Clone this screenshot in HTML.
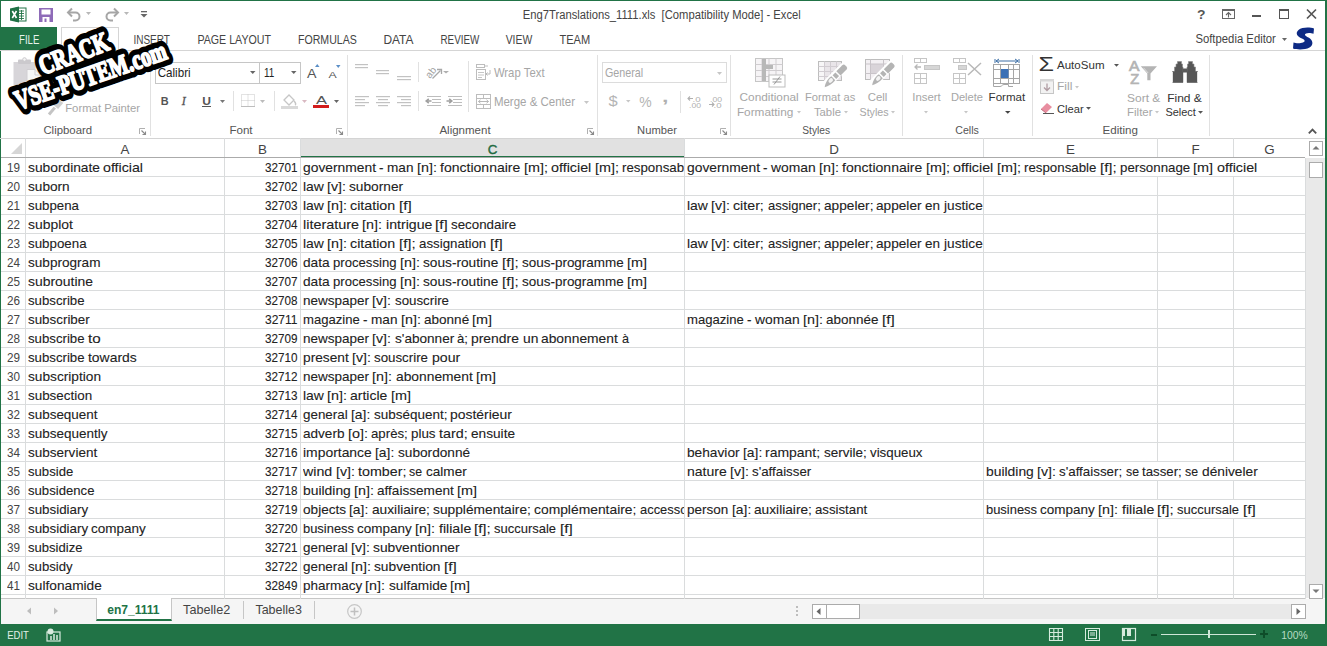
<!DOCTYPE html>
<html><head><meta charset="utf-8"><style>
html,body{margin:0;padding:0}
body{width:1327px;height:646px;position:relative;overflow:hidden;background:#fff;font-family:"Liberation Sans",sans-serif;color:#444}
.a{position:absolute}
#grid .vl{position:absolute;width:1px;background:#dadcdd}
#grid .hl{position:absolute;left:1px;width:1304px;height:1px;background:#dadcdd}
#grid .vh{position:absolute;top:138px;width:1px;height:19px;background:#dadcdd}
#grid .ch{position:absolute;top:139px;height:18px;line-height:22px;text-align:center;font-size:13.4px;color:#444;background:#fff}
#grid .ch.sel{background:#e1e1e1;color:#1f6b41;height:17px;border-bottom:2px solid #217346;top:139px;line-height:22px;-webkit-text-stroke:0.4px #1f6b41}
#grid .rh{position:absolute;left:1px;width:24px;height:18px;line-height:20px;text-align:center;font-size:13.5px;color:#444}
#grid .s{position:absolute;top:0;transform-origin:0 0;white-space:nowrap}
#grid .c{position:absolute;height:18px;line-height:20px;font-size:13.5px;color:#222;-webkit-text-stroke:0.1px #222;white-space:nowrap;overflow:hidden}
#grid .c.n{text-align:right}
.t{position:absolute;white-space:nowrap;transform-origin:0 0}
svg.a{overflow:visible}

</style></head><body>
<div class="a" style="left:0px;top:0px;width:1327px;height:1px;background:#217346"></div>
<div class="a" style="left:0px;top:0px;width:1px;height:646px;background:#217346"></div>
<div class="a" style="left:1325px;top:0px;width:2px;height:646px;background:#217346"></div>
<svg class="a" style="left:10px;top:6px;" width="17" height="17" viewBox="0 0 17 17"><rect x="6" y="2" width="10" height="13" fill="#fff" stroke="#217346" stroke-width="1"/><path d="M9 5h5M9 7.5h5M9 10h5M9 12.5h5M11.5 4v10" stroke="#217346" stroke-width="0.9"/><path d="M0 2.5L9 0.5V16.5L0 14.5Z" fill="#1e7145"/><path d="M2.3 5L6.5 12M6.5 5L2.3 12" stroke="#fff" stroke-width="1.6"/></svg>
<svg class="a" style="left:39px;top:8px;" width="14" height="14" viewBox="0 0 14 14"><path d="M0 0H14V14H0Z" fill="#8e6bb8"/><rect x="2.5" y="1.5" width="9" height="5" fill="#fff"/><rect x="3.5" y="9" width="7" height="5" fill="#fff"/><rect x="5.5" y="10.5" width="2" height="3.5" fill="#8e6bb8"/></svg>
<svg class="a" style="left:66px;top:7px;" width="16" height="14" viewBox="0 0 16 14"><path d="M2.5 5.5H9.5A4 4 0 0 1 9.5 13.5H7" fill="none" stroke="#a6a6a6" stroke-width="2"/><path d="M6 1.5L2 5.5L6 9.5" fill="none" stroke="#a6a6a6" stroke-width="2"/></svg>
<svg class="a" style="left:86px;top:12px;" width="6" height="4" viewBox="0 0 6 4"><path d="M0 0H5L2.5 3Z" fill="#b8b8b8"/></svg>
<svg class="a" style="left:104px;top:7px;" width="16" height="14" viewBox="0 0 16 14"><path d="M13.5 5.5H6.5A4 4 0 0 0 6.5 13.5H9" fill="none" stroke="#a6a6a6" stroke-width="2"/><path d="M10 1.5L14 5.5L10 9.5" fill="none" stroke="#a6a6a6" stroke-width="2"/></svg>
<svg class="a" style="left:124px;top:12px;" width="6" height="4" viewBox="0 0 6 4"><path d="M0 0H5L2.5 3Z" fill="#b8b8b8"/></svg>
<svg class="a" style="left:140px;top:11px;" width="8" height="7" viewBox="0 0 8 7"><rect x="1" y="0" width="6" height="1.3" fill="#666"/><path d="M0.5 3H7.5L4 6.5Z" fill="#666"/></svg>


<svg class="a" style="left:1222px;top:9px;" width="13" height="10" viewBox="0 0 13 10"><rect x="0.5" y="0.5" width="12" height="9" fill="none" stroke="#666"/><rect x="0" y="0" width="13" height="2" fill="#666"/><path d="M6.5 3.5V8.5M4 6L6.5 3.5L9 6" fill="none" stroke="#666" stroke-width="1.1"/></svg>
<div class="a" style="left:1252px;top:15px;width:9px;height:2px;background:#555"></div>
<svg class="a" style="left:1279px;top:9px;" width="10" height="10" viewBox="0 0 10 10"><rect x="0.5" y="0.5" width="9" height="9" fill="none" stroke="#555"/><rect x="0" y="0" width="10" height="2" fill="#555"/></svg>
<svg class="a" style="left:1306px;top:9px;" width="11" height="10" viewBox="0 0 11 10"><path d="M1 0.5L10 9.5M10 0.5L1 9.5" stroke="#555" stroke-width="1.7"/></svg>
<div class="a" style="left:1px;top:27px;width:56px;height:23px;background:#217346"></div>

<div class="a" style="left:61px;top:27px;width:58px;height:24px;background:#fff;border:1px solid #d5d5d5;border-bottom:none;box-sizing:border-box"></div>
<div class="a" style="left:0px;top:50px;width:61px;height:1px;background:#d5d5d5"></div>
<div class="a" style="left:119px;top:50px;width:1206px;height:1px;background:#d5d5d5"></div>








<svg class="a" style="left:1282px;top:38px;" width="6" height="4" viewBox="0 0 6 4"><path d="M0 0H5L2.5 3Z" fill="#666"/></svg>
<svg class="a" style="left:1293px;top:27px;" width="22" height="23" viewBox="0 0 22 23"><path d="M21 1.5C17 0.2 9 0 5.5 3C2 6 4 9.5 9 11.5C12 12.8 12.5 14.5 10 15.5C7.5 16.5 3 16.5 0.5 15.5L0 21.5C4 22.8 12 23 16.5 20.5C21 18 20 13 15.5 10.5C12 8.8 11 7.5 13 6.5C15 5.5 18.5 6 20.5 6.8Z" fill="#0d2a84"/></svg>
<div class="a" style="left:150px;top:55px;width:1px;height:81px;background:#e1e1e1"></div>
<div class="a" style="left:347px;top:55px;width:1px;height:81px;background:#e1e1e1"></div>
<div class="a" style="left:597px;top:55px;width:1px;height:81px;background:#e1e1e1"></div>
<div class="a" style="left:730px;top:55px;width:1px;height:81px;background:#e1e1e1"></div>
<div class="a" style="left:902px;top:55px;width:1px;height:81px;background:#e1e1e1"></div>
<div class="a" style="left:1032px;top:55px;width:1px;height:81px;background:#e1e1e1"></div>
<div class="a" style="left:1209px;top:55px;width:1px;height:81px;background:#e1e1e1"></div>
<div class="a" style="left:0px;top:138px;width:1325px;height:1px;background:#d4d4d4"></div>







<svg class="a" style="left:139px;top:128px;" width="8" height="7" viewBox="0 0 8 7"><path d="M0.5 6V0.5H6" fill="none" stroke="#b0b0b0" stroke-width="1"/><path d="M2.5 2.5L6.5 6.5M3.5 6.5H6.5V3.5" fill="none" stroke="#8a8a8a" stroke-width="1.1"/></svg>
<svg class="a" style="left:336px;top:128px;" width="8" height="7" viewBox="0 0 8 7"><path d="M0.5 6V0.5H6" fill="none" stroke="#b0b0b0" stroke-width="1"/><path d="M2.5 2.5L6.5 6.5M3.5 6.5H6.5V3.5" fill="none" stroke="#8a8a8a" stroke-width="1.1"/></svg>
<svg class="a" style="left:587px;top:128px;" width="8" height="7" viewBox="0 0 8 7"><path d="M0.5 6V0.5H6" fill="none" stroke="#b0b0b0" stroke-width="1"/><path d="M2.5 2.5L6.5 6.5M3.5 6.5H6.5V3.5" fill="none" stroke="#8a8a8a" stroke-width="1.1"/></svg>
<svg class="a" style="left:720px;top:128px;" width="8" height="7" viewBox="0 0 8 7"><path d="M0.5 6V0.5H6" fill="none" stroke="#b0b0b0" stroke-width="1"/><path d="M2.5 2.5L6.5 6.5M3.5 6.5H6.5V3.5" fill="none" stroke="#8a8a8a" stroke-width="1.1"/></svg>
<svg class="a" style="left:1308px;top:128px;" width="9" height="6" viewBox="0 0 9 6"><path d="M0.8 5.3L4.5 1.5L8.2 5.3" fill="none" stroke="#555" stroke-width="1.8"/></svg>
<svg class="a" style="left:12px;top:56px;" width="30" height="40" viewBox="0 0 30 40"><rect x="1.5" y="6" width="22" height="23" fill="#d7d5d9"/><rect x="6" y="3.5" width="13" height="4.5" rx="1" fill="#cbc9cd"/><circle cx="12.5" cy="3.5" r="1.8" fill="#f4f4f4" stroke="#cbc9cd"/><path d="M15 13.5H23L28.5 19V36H15Z" fill="#f6f6f6" stroke="#d0ced2"/><path d="M23 13.5V19H28.5" fill="none" stroke="#d0ced2"/></svg>

<svg class="a" style="left:46px;top:99px;" width="18" height="18" viewBox="0 0 18 18"><g transform="translate(3,15.5) rotate(-50)"><rect x="0" y="-1.5" width="9" height="3" fill="#c4c4c4"/><rect x="10" y="-3.5" width="8" height="7" fill="#cfcfcf"/></g></svg>
<div class="a" style="left:155px;top:62px;width:105px;height:22px;background:#fff;border:1px solid #c6c6c6;box-sizing:border-box"></div>
<div class="a" style="left:259px;top:62px;width:42px;height:22px;background:#fff;border:1px solid #c6c6c6;box-sizing:border-box"></div>


<svg class="a" style="left:250px;top:71px;" width="6" height="4" viewBox="0 0 6 4"><path d="M0 0H5.5L2.75 3Z" fill="#666"/></svg>
<svg class="a" style="left:291px;top:71px;" width="6" height="4" viewBox="0 0 6 4"><path d="M0 0H5.5L2.75 3Z" fill="#666"/></svg>

<svg class="a" style="left:315px;top:64px;" width="5" height="4" viewBox="0 0 5 4"><path d="M0 3H4.5L2.25 0Z" fill="#5b8fc7"/></svg>

<svg class="a" style="left:336px;top:65px;" width="5" height="4" viewBox="0 0 5 4"><path d="M0 0H4.5L2.25 3Z" fill="#5b8fc7"/></svg>



<div class="a" style="left:202px;top:106px;width:9px;height:1px;background:#555"></div>
<svg class="a" style="left:220px;top:100px;" width="6" height="4" viewBox="0 0 6 4"><path d="M0 0H5L2.5 3Z" fill="#777"/></svg>
<div class="a" style="left:233px;top:91px;width:1px;height:20px;background:#e1e1e1"></div>
<svg class="a" style="left:241px;top:94px;" width="14" height="14" viewBox="0 0 14 14"><rect x="0.5" y="0.5" width="13" height="12" fill="none" stroke="#c6c6c6" stroke-dasharray="1 1"/><path d="M7 0.5V12.5M0.5 6.5H13.5" stroke="#c6c6c6" stroke-dasharray="1 1"/><path d="M0 12.5H14" stroke="#bdbdbd"/></svg>
<svg class="a" style="left:260px;top:100px;" width="6" height="4" viewBox="0 0 6 4"><path d="M0 0H5L2.5 3Z" fill="#bbb"/></svg>
<div class="a" style="left:274px;top:91px;width:1px;height:20px;background:#e1e1e1"></div>
<svg class="a" style="left:281px;top:94px;" width="17" height="15" viewBox="0 0 17 15"><path d="M3 6L8 1L13 6L8 11Z" fill="#fff" stroke="#c6c6c6" stroke-width="1.3"/><path d="M13 7C15 9 15 10.5 14 11" stroke="#c6c6c6" stroke-width="1.5" fill="none"/><rect x="0" y="12" width="17" height="3" fill="#d9d9d9"/></svg>
<svg class="a" style="left:302px;top:100px;" width="6" height="4" viewBox="0 0 6 4"><path d="M0 0H5L2.5 3Z" fill="#d9b9c2"/></svg>

<div class="a" style="left:313px;top:105px;width:16px;height:3px;background:#d31c1c"></div>
<svg class="a" style="left:334px;top:100px;" width="6" height="4" viewBox="0 0 6 4"><path d="M0 0H5L2.5 3Z" fill="#666"/></svg>
<svg class="a" style="left:355px;top:64px;" width="13" height="6" viewBox="0 0 13 6"><rect x="0" y="0" width="13" height="1.2" fill="#c2c2c2"/><rect x="0" y="3" width="13" height="1.2" fill="#c2c2c2"/></svg>
<svg class="a" style="left:376px;top:70px;" width="13" height="6" viewBox="0 0 13 6"><rect x="0" y="0" width="13" height="1.2" fill="#c2c2c2"/><rect x="0" y="3" width="13" height="1.2" fill="#c2c2c2"/></svg>
<svg class="a" style="left:397px;top:76px;" width="14" height="6" viewBox="0 0 14 6"><rect x="0" y="0" width="14" height="1.2" fill="#c2c2c2"/><rect x="0" y="3" width="14" height="1.2" fill="#c2c2c2"/></svg>
<svg class="a" style="left:355px;top:96px;" width="14" height="12" viewBox="0 0 14 12"><rect x="0" y="0" width="14" height="1.2" fill="#c2c2c2"/><rect x="0" y="3" width="10" height="1.2" fill="#c2c2c2"/><rect x="0" y="6" width="14" height="1.2" fill="#c2c2c2"/><rect x="0" y="9" width="10" height="1.2" fill="#c2c2c2"/></svg>
<svg class="a" style="left:376px;top:96px;" width="14" height="12" viewBox="0 0 14 12"><rect x="0.0" y="0" width="14" height="1.2" fill="#c2c2c2"/><rect x="2.0" y="3" width="10" height="1.2" fill="#c2c2c2"/><rect x="0.0" y="6" width="14" height="1.2" fill="#c2c2c2"/><rect x="2.0" y="9" width="10" height="1.2" fill="#c2c2c2"/></svg>
<svg class="a" style="left:397px;top:96px;" width="14" height="12" viewBox="0 0 14 12"><rect x="0" y="0" width="14" height="1.2" fill="#c2c2c2"/><rect x="4" y="3" width="10" height="1.2" fill="#c2c2c2"/><rect x="0" y="6" width="14" height="1.2" fill="#c2c2c2"/><rect x="4" y="9" width="10" height="1.2" fill="#c2c2c2"/></svg>
<div class="a" style="left:418px;top:62px;width:1px;height:20px;background:#e1e1e1"></div>
<div class="a" style="left:418px;top:91px;width:1px;height:20px;background:#e1e1e1"></div>
<div class="a" style="left:468px;top:61px;width:1px;height:51px;background:#e1e1e1"></div>
<svg class="a" style="left:424px;top:62px;" width="28" height="20" viewBox="0 0 28 20"><text font-family="Liberation Sans" font-size="10" fill="#a0a0a0" transform="translate(6,17) rotate(-52)">ab</text><path d="M8.5 16.5L16.5 8.5" stroke="#a8a8a8" stroke-width="1.3"/><path d="M13 7.5H17.5V12" stroke="#a8a8a8" stroke-width="1.3" fill="none"/><path d="M19 9H25L22 11.5Z" fill="#b0b0b0"/></svg>
<svg class="a" style="left:425px;top:96px;" width="17" height="11" viewBox="0 0 17 11"><path d="M2 0.5H16M7 3.5H16M7 6.5H16M2 9.5H16" stroke="#bdbdbd" stroke-width="1"/><path d="M6.5 5H2M3.8 2.8L1.2 5L3.8 7.2" stroke="#a0a0a0" stroke-width="1.6" fill="none"/></svg>
<svg class="a" style="left:446px;top:96px;" width="17" height="11" viewBox="0 0 17 11"><path d="M2 0.5H16M7 3.5H16M7 6.5H16M2 9.5H16" stroke="#bdbdbd" stroke-width="1"/><path d="M0.5 5H5M3.2 2.8L5.8 5L3.2 7.2" stroke="#a0a0a0" stroke-width="1.6" fill="none"/></svg>
<svg class="a" style="left:476px;top:64px;" width="15" height="16" viewBox="0 0 15 16"><rect x="0.5" y="0.5" width="8" height="3" fill="none" stroke="#bdbdbd"/><path d="M9 2H12" stroke="#bdbdbd"/><rect x="0.5" y="5.5" width="9" height="10" fill="none" stroke="#bdbdbd"/><path d="M2 8.5H8M2 11H8M2 13.5H6" stroke="#c6c6c6"/><path d="M14 6V10H10M11.5 8.5L10 10L11.5 11.5" stroke="#b8b8b8" fill="none"/></svg>

<svg class="a" style="left:476px;top:94px;" width="15" height="15" viewBox="0 0 15 15"><rect x="0.5" y="0.5" width="14" height="14" fill="none" stroke="#bdbdbd"/><path d="M0.5 4.5H14.5M0.5 10.5H14.5M7.5 0.5V4.5M7.5 10.5V14.5" stroke="#bdbdbd"/><path d="M2.5 7.5H12.5M4.5 5.8L2.5 7.5L4.5 9.2M10.5 5.8L12.5 7.5L10.5 9.2" stroke="#b8b8b8" fill="none"/></svg>

<svg class="a" style="left:584px;top:101px;" width="6" height="4" viewBox="0 0 6 4"><path d="M0 0H5L2.5 3Z" fill="#c6c6c6"/></svg>
<div class="a" style="left:602px;top:62px;width:125px;height:21px;background:#fff;border:1px solid #dcdcdc;box-sizing:border-box"></div>

<svg class="a" style="left:717px;top:72px;" width="6" height="4" viewBox="0 0 6 4"><path d="M0 0H5L2.5 3Z" fill="#c6c6c6"/></svg>

<svg class="a" style="left:626px;top:100px;" width="5" height="3" viewBox="0 0 5 3"><path d="M0 0H4.5L2.25 2.5Z" fill="#c6c6c6"/></svg>


<div class="a" style="left:680px;top:91px;width:1px;height:22px;background:#e1e1e1"></div>
<svg class="a" style="left:687px;top:95px;" width="16" height="13" viewBox="0 0 16 13"><path d="M1 3.5H6M3 1.5L1 3.5L3 5.5" stroke="#b0b0b0" stroke-width="1.1" fill="none"/><text x="5.5" y="6.5" font-family="Liberation Sans" font-size="8" fill="#b0b0b0" textLength="8" lengthAdjust="spacingAndGlyphs">.0</text><text x="2" y="12.5" font-family="Liberation Sans" font-size="8" fill="#b0b0b0" textLength="12" lengthAdjust="spacingAndGlyphs">.00</text></svg>
<svg class="a" style="left:708px;top:95px;" width="16" height="13" viewBox="0 0 16 13"><text x="2" y="6.5" font-family="Liberation Sans" font-size="8" fill="#b0b0b0" textLength="12" lengthAdjust="spacingAndGlyphs">.00</text><path d="M1 9.5H6M4 7.5L6 9.5L4 11.5" stroke="#b0b0b0" stroke-width="1.1" fill="none"/><text x="5.5" y="12.5" font-family="Liberation Sans" font-size="8" fill="#b0b0b0" textLength="8" lengthAdjust="spacingAndGlyphs">.0</text></svg>
<svg class="a" style="left:755px;top:58px;" width="31" height="29" viewBox="0 0 31 29"><rect x="0.5" y="0.5" width="27" height="23" fill="#f6f4f6" stroke="#c6c6c6"/><path d="M7 0.5V23.5M14 0.5V23.5M21 0.5V23.5M0.5 6.5H27.5M0.5 12.5H27.5M0.5 18.5H27.5" stroke="#d0cdd0"/><rect x="7" y="1" width="4" height="22" fill="#b8b8b8"/><rect x="7" y="7" width="11" height="4" fill="#b8b8b8"/><rect x="14" y="17" width="16" height="12" fill="#fff" stroke="#bdbdbd"/><path d="M17.5 21H26.5M17.5 24H26.5M19 26.5L25 18.5" stroke="#999" stroke-width="1"/></svg>


<svg class="a" style="left:797px;top:111px;" width="5" height="3" viewBox="0 0 5 3"><path d="M0 0H4L2 2.5Z" fill="#c6c6c6"/></svg>
<svg class="a" style="left:815px;top:57px;" width="36" height="34" viewBox="0 0 36 34"><rect x="3.5" y="4.5" width="23" height="19" fill="#e9e5e9" stroke="#bdbdbd"/><rect x="4" y="5" width="5.5" height="18" fill="#f7f6f7"/><path d="M9.5 4.5V23.5M15.5 4.5V23.5M21.5 4.5V23.5M3.5 9.5H26.5M3.5 14.5H26.5M3.5 19.5H26.5" stroke="#d2cdd2"/><g transform="translate(9.5,30) rotate(-45)"><rect x="-1" y="-4.8" width="32" height="8.6" rx="3" fill="#fff"/><path d="M0 0.3C3 -2.2 8 -3.6 12.5 -2.8L12.5 2.8C8 3.2 3 2 0 0.3Z" fill="#b4b4b4"/><ellipse cx="9" cy="-0.2" rx="2.6" ry="1.9" fill="#f4f4f4"/><rect x="14" y="-2.6" width="4" height="5.2" fill="#b4b4b4"/><path d="M19.5 -2.8H28Q30 -2.8 30 -0.5V1Q30 3.2 28 3.2H19.5Z" fill="#b4b4b4"/></g></svg>


<svg class="a" style="left:844px;top:111px;" width="5" height="3" viewBox="0 0 5 3"><path d="M0 0H4L2 2.5Z" fill="#c6c6c6"/></svg>
<svg class="a" style="left:862px;top:56px;" width="36" height="34" viewBox="0 0 36 34"><rect x="3.5" y="3.5" width="24" height="20" fill="#f3f0f3" stroke="#bdbdbd"/><rect x="9" y="8" width="12.5" height="9.5" fill="#d9d4d9"/><path d="M3.5 8H27.5M3.5 17.5H27.5M8.5 3.5V23.5M21.5 3.5V23.5" stroke="#c9c4c9"/><g transform="translate(10,29) rotate(-45)"><rect x="-1" y="-4.8" width="32" height="8.6" rx="3" fill="#fff"/><path d="M0 0.3C3 -2.2 8 -3.6 12.5 -2.8L12.5 2.8C8 3.2 3 2 0 0.3Z" fill="#b4b4b4"/><ellipse cx="9" cy="-0.2" rx="2.6" ry="1.9" fill="#f4f4f4"/><rect x="14" y="-2.6" width="4" height="5.2" fill="#b4b4b4"/><path d="M19.5 -2.8H28Q30 -2.8 30 -0.5V1Q30 3.2 28 3.2H19.5Z" fill="#b4b4b4"/></g></svg>


<svg class="a" style="left:891px;top:111px;" width="5" height="3" viewBox="0 0 5 3"><path d="M0 0H4L2 2.5Z" fill="#c6c6c6"/></svg>
<svg class="a" style="left:914px;top:58px;" width="26" height="27" viewBox="0 0 26 27"><rect x="0.5" y="0.5" width="6" height="4" fill="none" stroke="#c6c6c6"/><rect x="6.5" y="0.5" width="6" height="4" fill="none" stroke="#c6c6c6"/><path d="M7 9H1M3.5 6.5L1 9L3.5 11.5" stroke="#b8b8b8" stroke-width="1.3" fill="none"/><rect x="10.5" y="7.5" width="15" height="4" fill="#d6d6d6" stroke="#c6c6c6"/><rect x="0.5" y="15.5" width="12" height="10" fill="none" stroke="#c6c6c6"/><path d="M6.5 15.5V25.5M0.5 20.5H12.5" stroke="#c6c6c6"/></svg>

<svg class="a" style="left:924px;top:111px;" width="5" height="3" viewBox="0 0 5 3"><path d="M0 0H4L2 2.5Z" fill="#c6c6c6"/></svg>
<svg class="a" style="left:953px;top:58px;" width="30" height="27" viewBox="0 0 30 27"><rect x="0.5" y="0.5" width="6" height="4" fill="none" stroke="#c6c6c6"/><rect x="6.5" y="0.5" width="6" height="4" fill="none" stroke="#c6c6c6"/><rect x="5.5" y="7.5" width="8" height="4" fill="#d6d6d6" stroke="#c6c6c6"/><path d="M15 5L28 17M28 5L15 17" stroke="#b8b8b8" stroke-width="1.5"/><rect x="0.5" y="15.5" width="12" height="10" fill="none" stroke="#c6c6c6"/><path d="M6.5 15.5V25.5M0.5 20.5H12.5" stroke="#c6c6c6"/></svg>

<svg class="a" style="left:964px;top:111px;" width="5" height="3" viewBox="0 0 5 3"><path d="M0 0H4L2 2.5Z" fill="#c6c6c6"/></svg>
<svg class="a" style="left:993px;top:57px;" width="28" height="30" viewBox="0 0 28 30"><path d="M2 2V6M26 2V6M3 4H25M6 2L3 4L6 6M22 2L25 4L22 6" stroke="#3c6fa6" stroke-width="1" fill="none"/><rect x="0.5" y="7.5" width="26" height="19" fill="#fff" stroke="#a6a6a6"/><path d="M7.5 7.5V26.5M15.5 7.5V26.5M20.5 7.5V26.5M0.5 12.5H26.5M0.5 21.5H26.5" stroke="#a6a6a6"/><rect x="8" y="12" width="7.5" height="9" fill="#3b70b5"/><path d="M0.5 26.5V29.5H7C9 29.5 9 27.5 11 27.5H15.5V29.5H20" stroke="#a6a6a6" fill="none"/></svg>

<svg class="a" style="left:1005px;top:111px;" width="6" height="3" viewBox="0 0 6 3"><path d="M0 0H5.5L2.75 2.7Z" fill="#444"/></svg>


<svg class="a" style="left:1114px;top:64px;" width="6" height="3" viewBox="0 0 6 3"><path d="M0 0H5L2.5 2.7Z" fill="#555"/></svg>
<svg class="a" style="left:1040px;top:79px;" width="14" height="15" viewBox="0 0 14 15"><rect x="0.5" y="0.5" width="13" height="14" fill="#f2f2f2" stroke="#c6c6c6"/><rect x="0" y="0" width="14" height="2.5" fill="#d6d6d6"/><path d="M7 4.5V11.5M4 8.5L7 11.5L10 8.5" stroke="#b09ca2" stroke-width="1.3" fill="none"/></svg>

<svg class="a" style="left:1075px;top:86px;" width="5" height="3" viewBox="0 0 5 3"><path d="M0 0H4L2 2.5Z" fill="#c6c6c6"/></svg>
<svg class="a" style="left:1040px;top:102px;" width="15" height="12" viewBox="0 0 15 12"><path d="M1 7L7 1L12 5L6 11Z" fill="#e88ea0"/><path d="M1 7L6 11" stroke="#c56f80"/><path d="M3 11.5H14" stroke="#555" stroke-width="1"/></svg>

<svg class="a" style="left:1086px;top:107px;" width="6" height="3" viewBox="0 0 6 3"><path d="M0 0H5L2.5 2.7Z" fill="#555"/></svg>
<svg class="a" style="left:1128px;top:58px;" width="31" height="28" viewBox="0 0 31 28"><text x="1" y="12.7" font-family="Liberation Sans" font-size="15" fill="#b4b4b4" stroke="#b4b4b4" stroke-width="0.7" textLength="10.5" lengthAdjust="spacingAndGlyphs">A</text><text x="2.2" y="25.8" font-family="Liberation Sans" font-size="15" fill="#b4b4b4" stroke="#b4b4b4" stroke-width="0.7" textLength="9" lengthAdjust="spacingAndGlyphs">Z</text><path d="M12.8 8.2H29L22.5 15.5V22.3H19.3V15.5Z" fill="#b4b4b4"/><path d="M15.5 9.8L20.2 15" stroke="#dedede" stroke-width="1" fill="none"/></svg>


<svg class="a" style="left:1155px;top:111px;" width="5" height="3" viewBox="0 0 5 3"><path d="M0 0H4L2 2.5Z" fill="#c6c6c6"/></svg>
<svg class="a" style="left:1172px;top:61px;" width="26" height="22" viewBox="0 0 26 22"><g fill="#575757" stroke="#8a8a8a" stroke-width="0.6"><path d="M5.5 0.5H9.5V3H10.5V6H11V21.5H3V13H0.5V21.5H3V13H0.5V10.5H2.5V6H4V3H5.5Z"/><path d="M20.5 0.5H16.5V3H15.5V6H15V21.5H23V13H25.5V21.5H23V13H25.5V10.5H23.5V6H22V3H20.5Z"/></g><rect x="0.5" y="10.5" width="10.5" height="11" fill="#575757"/><rect x="15" y="10.5" width="10.5" height="11" fill="#575757"/><rect x="10.5" y="7.5" width="5" height="4" fill="#5a5a5a"/><path d="M0.5 11V21.5M25.5 11V21.5" stroke="#fff" stroke-width="0.8"/></svg>


<svg class="a" style="left:1198px;top:111px;" width="6" height="3" viewBox="0 0 6 3"><path d="M0 0H5L2.5 2.7Z" fill="#555"/></svg>
<svg class="a" style="left:11px;top:143px;" width="12" height="12" viewBox="0 0 12 12"><path d="M11 0V11H0Z" fill="#d6d6d6"/></svg>
<div class="a" style="left:1305px;top:158px;width:20px;height:440px;background:#e9e9e9"></div>
<div class="a" style="left:1309px;top:141px;width:14px;height:15px;background:#fff;border:1px solid #ababab;box-sizing:border-box"></div>
<svg class="a" style="left:1312px;top:145px;" width="8" height="5" viewBox="0 0 8 5"><path d="M0.5 4.5H7.5L4 1Z" fill="#777"/></svg>
<div class="a" style="left:1309px;top:162px;width:14px;height:16px;background:#fff;border:1px solid #ababab;box-sizing:border-box"></div>
<div class="a" style="left:1309px;top:584px;width:14px;height:15px;background:#fff;border:1px solid #ababab;box-sizing:border-box"></div>
<svg class="a" style="left:1312px;top:589px;" width="8" height="5" viewBox="0 0 8 5"><path d="M0.5 0.5H7.5L4 4Z" fill="#777"/></svg>
<div class="a" style="left:1px;top:598px;width:1305px;height:1px;background:#c6c6c6"></div>
<div class="a" style="left:1px;top:599px;width:1324px;height:25px;background:#f5f5f5"></div>
<svg class="a" style="left:26px;top:607px;" width="6" height="8" viewBox="0 0 6 8"><path d="M5 0.5V7.5L1 4Z" fill="#bdbdbd"/></svg>
<svg class="a" style="left:53px;top:607px;" width="6" height="8" viewBox="0 0 6 8"><path d="M1 0.5V7.5L5 4Z" fill="#bdbdbd"/></svg>
<div class="a" style="left:96px;top:598px;width:76px;height:23px;background:#fff;border-left:1px solid #c6c6c6;border-right:1px solid #c6c6c6;border-bottom:2px solid #217346;box-sizing:border-box"></div>


<div class="a" style="left:243px;top:601px;width:1px;height:18px;background:#c6c6c6"></div>

<div class="a" style="left:314px;top:601px;width:1px;height:18px;background:#c6c6c6"></div>
<svg class="a" style="left:347px;top:604px;" width="16" height="16" viewBox="0 0 16 16"><circle cx="7.5" cy="7.5" r="6.8" fill="none" stroke="#c6c6c6" stroke-width="1.2"/><path d="M7.5 3.5V11.5M3.5 7.5H11.5" stroke="#c0c0c0" stroke-width="1.5"/></svg>
<svg class="a" style="left:795px;top:605px;" width="4" height="12" viewBox="0 0 4 12"><circle cx="2" cy="2" r="1" fill="#aaa"/><circle cx="2" cy="6" r="1" fill="#aaa"/><circle cx="2" cy="10" r="1" fill="#aaa"/></svg>
<div class="a" style="left:812px;top:604px;width:493px;height:15px;background:#e9e9e9"></div>
<div class="a" style="left:812px;top:604px;width:15px;height:15px;background:#fff;border:1px solid #ababab;box-sizing:border-box"></div>
<svg class="a" style="left:816px;top:608px;" width="6" height="8" viewBox="0 0 6 8"><path d="M4.5 0V7L0.5 3.5Z" fill="#666"/></svg>
<div class="a" style="left:826px;top:604px;width:34px;height:15px;background:#fff;border:1px solid #ababab;box-sizing:border-box"></div>
<div class="a" style="left:1291px;top:604px;width:15px;height:15px;background:#fff;border:1px solid #ababab;box-sizing:border-box"></div>
<svg class="a" style="left:1296px;top:608px;" width="6" height="8" viewBox="0 0 6 8"><path d="M0.5 0V7L4.5 3.5Z" fill="#666"/></svg>
<div class="a" style="left:0px;top:624px;width:1327px;height:22px;background:#217346"></div>

<svg class="a" style="left:47px;top:628px;" width="14" height="14" viewBox="0 0 14 14"><rect x="0" y="4" width="13" height="9" fill="none" stroke="#d8ebde" stroke-width="1.2"/><circle cx="3.5" cy="3.5" r="3" fill="#d8ebde"/><path d="M4 12V8M7 12V6M10 12V7" stroke="#d8ebde" stroke-width="1.5"/></svg>
<svg class="a" style="left:1049px;top:628px;" width="14" height="13" viewBox="0 0 14 13"><path d="M0.5 0.5H13.5V12.5H0.5ZM0.5 4.5H13.5M0.5 8.5H13.5M4.8 0.5V12.5M9.2 0.5V12.5" fill="none" stroke="#d6ebdd" stroke-width="1.1"/></svg>
<svg class="a" style="left:1085px;top:628px;" width="15" height="13" viewBox="0 0 15 13"><rect x="0.5" y="0.5" width="14" height="12" fill="none" stroke="#d6ebdd"/><rect x="3.5" y="2.5" width="8" height="8" fill="none" stroke="#d6ebdd"/><path d="M5 5H10M5 7H10" stroke="#d6ebdd"/></svg>
<svg class="a" style="left:1122px;top:628px;" width="14" height="13" viewBox="0 0 14 13"><rect x="0.5" y="0.5" width="13" height="12" fill="none" stroke="#d6ebdd" stroke-width="1.2"/><rect x="0" y="0" width="3" height="8" fill="#d6ebdd"/><rect x="5" y="0" width="4" height="8" fill="#d6ebdd"/></svg>
<div class="a" style="left:1151px;top:634px;width:6px;height:1.5px;background:#0e4d29"></div>
<div class="a" style="left:1161px;top:634px;width:95px;height:1px;background:#cfe6d7"></div>
<div class="a" style="left:1208px;top:630px;width:1.5px;height:8px;background:#cfe6d7"></div>
<svg class="a" style="left:1260px;top:630px;" width="8" height="8" viewBox="0 0 8 8"><path d="M4 0V8M0 4H8" stroke="#0e4d29" stroke-width="2"/></svg>

<svg class="a" style="left:0;top:0" width="1327" height="646" font-family="Liberation Sans"><text x="522.80" y="19.30" font-size="12.21" fill="#444" textLength="278.00" lengthAdjust="spacingAndGlyphs">Eng7Translations_1111.xls &#160;[Compatibility&#160;Mode]&#160;-&#160;Excel</text><text x="1197.10" y="18.70" font-size="13.08" fill="#555" font-weight="bold" textLength="8.50" lengthAdjust="spacingAndGlyphs">?</text><text x="19.10" y="43.70" font-size="12.35" fill="#e8f3ec" textLength="20.20" lengthAdjust="spacingAndGlyphs">FILE</text><text x="133.40" y="43.60" font-size="12.35" fill="#444" textLength="36.50" lengthAdjust="spacingAndGlyphs">INSERT</text><text x="197.40" y="43.60" font-size="12.35" fill="#444" textLength="73.60" lengthAdjust="spacingAndGlyphs">PAGE&#160;LAYOUT</text><text x="298.00" y="43.60" font-size="12.35" fill="#444" textLength="58.90" lengthAdjust="spacingAndGlyphs">FORMULAS</text><text x="383.40" y="43.60" font-size="12.35" fill="#444" textLength="30.00" lengthAdjust="spacingAndGlyphs">DATA</text><text x="440.50" y="43.60" font-size="12.35" fill="#444" textLength="38.80" lengthAdjust="spacingAndGlyphs">REVIEW</text><text x="505.70" y="43.60" font-size="12.35" fill="#444" textLength="26.50" lengthAdjust="spacingAndGlyphs">VIEW</text><text x="559.40" y="43.60" font-size="12.35" fill="#444" textLength="30.70" lengthAdjust="spacingAndGlyphs">TEAM</text><text x="1195.40" y="42.70" font-size="12.65" fill="#444" textLength="80.50" lengthAdjust="spacingAndGlyphs">Softpedia&#160;Editor</text><text x="43.40" y="134.40" font-size="11.05" fill="#555" textLength="48.70" lengthAdjust="spacingAndGlyphs">Clipboard</text><text x="229.40" y="134.40" font-size="11.05" fill="#555" textLength="23.20" lengthAdjust="spacingAndGlyphs">Font</text><text x="439.40" y="134.40" font-size="11.05" fill="#555" textLength="51.20" lengthAdjust="spacingAndGlyphs">Alignment</text><text x="637.10" y="134.40" font-size="11.05" fill="#555" textLength="39.80" lengthAdjust="spacingAndGlyphs">Number</text><text x="802.30" y="134.40" font-size="11.05" fill="#555" textLength="27.80" lengthAdjust="spacingAndGlyphs">Styles</text><text x="955.30" y="134.40" font-size="11.05" fill="#555" textLength="23.60" lengthAdjust="spacingAndGlyphs">Cells</text><text x="1102.60" y="134.40" font-size="11.05" fill="#555" textLength="35.40" lengthAdjust="spacingAndGlyphs">Editing</text><text x="65.20" y="112.20" font-size="11.34" fill="#a6a6a6" textLength="74.90" lengthAdjust="spacingAndGlyphs">Format&#160;Painter</text><text x="157.70" y="76.90" font-size="12.06" fill="#222" textLength="32.90" lengthAdjust="spacingAndGlyphs">Calibri</text><text x="263.90" y="76.90" font-size="12.06" fill="#222" textLength="10.30" lengthAdjust="spacingAndGlyphs">11</text><text x="306.90" y="77.60" font-size="12.06" fill="#555" textLength="9.50" lengthAdjust="spacingAndGlyphs">A</text><text x="328.40" y="77.60" font-size="9.88" fill="#555" textLength="8.20" lengthAdjust="spacingAndGlyphs">A</text><text x="160.70" y="104.70" font-size="10.90" fill="#555" font-weight="bold" textLength="7.90" lengthAdjust="spacingAndGlyphs">B</text><text x="181.80" y="104.90" font-size="11.92" fill="#555" font-family="Liberation Serif" font-style="italic" stroke="#555" stroke-width="0.3">I</text><text x="202.20" y="104.70" font-size="10.90" fill="#555" font-weight="bold" textLength="8.70" lengthAdjust="spacingAndGlyphs">U</text><text x="315.90" y="104.00" font-size="11.63" fill="#555" textLength="11.00" lengthAdjust="spacingAndGlyphs">A</text><text x="493.90" y="76.60" font-size="12.06" fill="#a6a6a6" textLength="50.70" lengthAdjust="spacingAndGlyphs">Wrap&#160;Text</text><text x="493.90" y="106.00" font-size="12.06" fill="#a6a6a6" textLength="81.10" lengthAdjust="spacingAndGlyphs">Merge&#160;&amp;&#160;Center</text><text x="604.90" y="76.60" font-size="12.06" fill="#a6a6a6" textLength="38.20" lengthAdjust="spacingAndGlyphs">General</text><text x="608.60" y="105.50" font-size="13.81" fill="#b4b4b4" textLength="9.20" lengthAdjust="spacingAndGlyphs">$</text><text x="639.20" y="106.70" font-size="13.81" fill="#b4b4b4" textLength="12.40" lengthAdjust="spacingAndGlyphs">%</text><text x="661.90" y="102.00" font-size="13.81" fill="#b0b0b0" font-weight="bold" textLength="6.50" lengthAdjust="spacingAndGlyphs">,</text><text x="739.60" y="101.30" font-size="11.34" fill="#a6a6a6" textLength="59.10" lengthAdjust="spacingAndGlyphs">Conditional</text><text x="736.90" y="116.00" font-size="11.34" fill="#a6a6a6" textLength="56.40" lengthAdjust="spacingAndGlyphs">Formatting</text><text x="805.00" y="101.30" font-size="11.34" fill="#a6a6a6" textLength="50.30" lengthAdjust="spacingAndGlyphs">Format&#160;as</text><text x="813.90" y="116.00" font-size="11.34" fill="#a6a6a6" textLength="27.10" lengthAdjust="spacingAndGlyphs">Table</text><text x="867.70" y="101.30" font-size="11.34" fill="#a6a6a6" textLength="19.60" lengthAdjust="spacingAndGlyphs">Cell</text><text x="859.50" y="116.00" font-size="11.34" fill="#a6a6a6" textLength="29.10" lengthAdjust="spacingAndGlyphs">Styles</text><text x="912.30" y="101.30" font-size="11.34" fill="#a6a6a6" textLength="28.50" lengthAdjust="spacingAndGlyphs">Insert</text><text x="950.90" y="101.30" font-size="11.34" fill="#a6a6a6" textLength="32.10" lengthAdjust="spacingAndGlyphs">Delete</text><text x="988.60" y="101.30" font-size="11.34" fill="#333" textLength="36.70" lengthAdjust="spacingAndGlyphs">Format</text><text x="1038.50" y="70.80" font-size="19.62" fill="#333" textLength="15.50" lengthAdjust="spacingAndGlyphs">Σ</text><text x="1057.00" y="69.00" font-size="10.90" fill="#333" textLength="47.50" lengthAdjust="spacingAndGlyphs">AutoSum</text><text x="1057.00" y="90.40" font-size="11.34" fill="#a6a6a6" textLength="15.40" lengthAdjust="spacingAndGlyphs">Fill</text><text x="1057.00" y="112.70" font-size="11.34" fill="#333" textLength="26.60" lengthAdjust="spacingAndGlyphs">Clear</text><text x="1127.00" y="101.50" font-size="11.34" fill="#a6a6a6" textLength="33.30" lengthAdjust="spacingAndGlyphs">Sort&#160;&amp;</text><text x="1127.00" y="116.40" font-size="11.34" fill="#a6a6a6" textLength="25.60" lengthAdjust="spacingAndGlyphs">Filter</text><text x="1167.20" y="101.50" font-size="11.34" fill="#333" textLength="34.70" lengthAdjust="spacingAndGlyphs">Find&#160;&amp;</text><text x="1165.40" y="116.40" font-size="11.34" fill="#333" textLength="30.50" lengthAdjust="spacingAndGlyphs">Select</text><text x="107.20" y="614.40" font-size="12.06" fill="#217346" font-weight="bold" textLength="52.40" lengthAdjust="spacingAndGlyphs">en7_1111</text><text x="183.10" y="614.40" font-size="12.06" fill="#444" textLength="47.10" lengthAdjust="spacingAndGlyphs">Tabelle2</text><text x="255.40" y="614.40" font-size="12.06" fill="#444" textLength="46.50" lengthAdjust="spacingAndGlyphs">Tabelle3</text><text x="7.20" y="638.50" font-size="10.90" fill="#e3efe7" textLength="21.70" lengthAdjust="spacingAndGlyphs">EDIT</text><text x="1281.20" y="638.90" font-size="11.34" fill="#b6dcc3" textLength="26.50" lengthAdjust="spacingAndGlyphs">100%</text></svg>
<div id="grid"><div class="vl" style="left:25px;top:158px;height:19px"></div><div class="vl" style="left:224px;top:158px;height:19px"></div><div class="vl" style="left:300px;top:158px;height:19px"></div><div class="vl" style="left:684px;top:158px;height:19px"></div><div class="vl" style="left:1305px;top:158px;height:19px"></div><div class="vl" style="left:25px;top:177px;height:19px"></div><div class="vl" style="left:224px;top:177px;height:19px"></div><div class="vl" style="left:300px;top:177px;height:19px"></div><div class="vl" style="left:684px;top:177px;height:19px"></div><div class="vl" style="left:983px;top:177px;height:19px"></div><div class="vl" style="left:1157px;top:177px;height:19px"></div><div class="vl" style="left:1233px;top:177px;height:19px"></div><div class="vl" style="left:1305px;top:177px;height:19px"></div><div class="vl" style="left:25px;top:196px;height:19px"></div><div class="vl" style="left:224px;top:196px;height:19px"></div><div class="vl" style="left:300px;top:196px;height:19px"></div><div class="vl" style="left:684px;top:196px;height:19px"></div><div class="vl" style="left:983px;top:196px;height:19px"></div><div class="vl" style="left:1157px;top:196px;height:19px"></div><div class="vl" style="left:1233px;top:196px;height:19px"></div><div class="vl" style="left:1305px;top:196px;height:19px"></div><div class="vl" style="left:25px;top:215px;height:19px"></div><div class="vl" style="left:224px;top:215px;height:19px"></div><div class="vl" style="left:300px;top:215px;height:19px"></div><div class="vl" style="left:684px;top:215px;height:19px"></div><div class="vl" style="left:983px;top:215px;height:19px"></div><div class="vl" style="left:1157px;top:215px;height:19px"></div><div class="vl" style="left:1233px;top:215px;height:19px"></div><div class="vl" style="left:1305px;top:215px;height:19px"></div><div class="vl" style="left:25px;top:234px;height:19px"></div><div class="vl" style="left:224px;top:234px;height:19px"></div><div class="vl" style="left:300px;top:234px;height:19px"></div><div class="vl" style="left:684px;top:234px;height:19px"></div><div class="vl" style="left:983px;top:234px;height:19px"></div><div class="vl" style="left:1157px;top:234px;height:19px"></div><div class="vl" style="left:1233px;top:234px;height:19px"></div><div class="vl" style="left:1305px;top:234px;height:19px"></div><div class="vl" style="left:25px;top:253px;height:19px"></div><div class="vl" style="left:224px;top:253px;height:19px"></div><div class="vl" style="left:300px;top:253px;height:19px"></div><div class="vl" style="left:684px;top:253px;height:19px"></div><div class="vl" style="left:983px;top:253px;height:19px"></div><div class="vl" style="left:1157px;top:253px;height:19px"></div><div class="vl" style="left:1233px;top:253px;height:19px"></div><div class="vl" style="left:1305px;top:253px;height:19px"></div><div class="vl" style="left:25px;top:272px;height:19px"></div><div class="vl" style="left:224px;top:272px;height:19px"></div><div class="vl" style="left:300px;top:272px;height:19px"></div><div class="vl" style="left:684px;top:272px;height:19px"></div><div class="vl" style="left:983px;top:272px;height:19px"></div><div class="vl" style="left:1157px;top:272px;height:19px"></div><div class="vl" style="left:1233px;top:272px;height:19px"></div><div class="vl" style="left:1305px;top:272px;height:19px"></div><div class="vl" style="left:25px;top:291px;height:19px"></div><div class="vl" style="left:224px;top:291px;height:19px"></div><div class="vl" style="left:300px;top:291px;height:19px"></div><div class="vl" style="left:684px;top:291px;height:19px"></div><div class="vl" style="left:983px;top:291px;height:19px"></div><div class="vl" style="left:1157px;top:291px;height:19px"></div><div class="vl" style="left:1233px;top:291px;height:19px"></div><div class="vl" style="left:1305px;top:291px;height:19px"></div><div class="vl" style="left:25px;top:310px;height:19px"></div><div class="vl" style="left:224px;top:310px;height:19px"></div><div class="vl" style="left:300px;top:310px;height:19px"></div><div class="vl" style="left:684px;top:310px;height:19px"></div><div class="vl" style="left:983px;top:310px;height:19px"></div><div class="vl" style="left:1157px;top:310px;height:19px"></div><div class="vl" style="left:1233px;top:310px;height:19px"></div><div class="vl" style="left:1305px;top:310px;height:19px"></div><div class="vl" style="left:25px;top:329px;height:19px"></div><div class="vl" style="left:224px;top:329px;height:19px"></div><div class="vl" style="left:300px;top:329px;height:19px"></div><div class="vl" style="left:684px;top:329px;height:19px"></div><div class="vl" style="left:983px;top:329px;height:19px"></div><div class="vl" style="left:1157px;top:329px;height:19px"></div><div class="vl" style="left:1233px;top:329px;height:19px"></div><div class="vl" style="left:1305px;top:329px;height:19px"></div><div class="vl" style="left:25px;top:348px;height:19px"></div><div class="vl" style="left:224px;top:348px;height:19px"></div><div class="vl" style="left:300px;top:348px;height:19px"></div><div class="vl" style="left:684px;top:348px;height:19px"></div><div class="vl" style="left:983px;top:348px;height:19px"></div><div class="vl" style="left:1157px;top:348px;height:19px"></div><div class="vl" style="left:1233px;top:348px;height:19px"></div><div class="vl" style="left:1305px;top:348px;height:19px"></div><div class="vl" style="left:25px;top:367px;height:19px"></div><div class="vl" style="left:224px;top:367px;height:19px"></div><div class="vl" style="left:300px;top:367px;height:19px"></div><div class="vl" style="left:684px;top:367px;height:19px"></div><div class="vl" style="left:983px;top:367px;height:19px"></div><div class="vl" style="left:1157px;top:367px;height:19px"></div><div class="vl" style="left:1233px;top:367px;height:19px"></div><div class="vl" style="left:1305px;top:367px;height:19px"></div><div class="vl" style="left:25px;top:386px;height:19px"></div><div class="vl" style="left:224px;top:386px;height:19px"></div><div class="vl" style="left:300px;top:386px;height:19px"></div><div class="vl" style="left:684px;top:386px;height:19px"></div><div class="vl" style="left:983px;top:386px;height:19px"></div><div class="vl" style="left:1157px;top:386px;height:19px"></div><div class="vl" style="left:1233px;top:386px;height:19px"></div><div class="vl" style="left:1305px;top:386px;height:19px"></div><div class="vl" style="left:25px;top:405px;height:19px"></div><div class="vl" style="left:224px;top:405px;height:19px"></div><div class="vl" style="left:300px;top:405px;height:19px"></div><div class="vl" style="left:684px;top:405px;height:19px"></div><div class="vl" style="left:983px;top:405px;height:19px"></div><div class="vl" style="left:1157px;top:405px;height:19px"></div><div class="vl" style="left:1233px;top:405px;height:19px"></div><div class="vl" style="left:1305px;top:405px;height:19px"></div><div class="vl" style="left:25px;top:424px;height:19px"></div><div class="vl" style="left:224px;top:424px;height:19px"></div><div class="vl" style="left:300px;top:424px;height:19px"></div><div class="vl" style="left:684px;top:424px;height:19px"></div><div class="vl" style="left:983px;top:424px;height:19px"></div><div class="vl" style="left:1157px;top:424px;height:19px"></div><div class="vl" style="left:1233px;top:424px;height:19px"></div><div class="vl" style="left:1305px;top:424px;height:19px"></div><div class="vl" style="left:25px;top:443px;height:19px"></div><div class="vl" style="left:224px;top:443px;height:19px"></div><div class="vl" style="left:300px;top:443px;height:19px"></div><div class="vl" style="left:684px;top:443px;height:19px"></div><div class="vl" style="left:983px;top:443px;height:19px"></div><div class="vl" style="left:1157px;top:443px;height:19px"></div><div class="vl" style="left:1233px;top:443px;height:19px"></div><div class="vl" style="left:1305px;top:443px;height:19px"></div><div class="vl" style="left:25px;top:462px;height:19px"></div><div class="vl" style="left:224px;top:462px;height:19px"></div><div class="vl" style="left:300px;top:462px;height:19px"></div><div class="vl" style="left:684px;top:462px;height:19px"></div><div class="vl" style="left:983px;top:462px;height:19px"></div><div class="vl" style="left:1305px;top:462px;height:19px"></div><div class="vl" style="left:25px;top:481px;height:19px"></div><div class="vl" style="left:224px;top:481px;height:19px"></div><div class="vl" style="left:300px;top:481px;height:19px"></div><div class="vl" style="left:684px;top:481px;height:19px"></div><div class="vl" style="left:983px;top:481px;height:19px"></div><div class="vl" style="left:1157px;top:481px;height:19px"></div><div class="vl" style="left:1233px;top:481px;height:19px"></div><div class="vl" style="left:1305px;top:481px;height:19px"></div><div class="vl" style="left:25px;top:500px;height:19px"></div><div class="vl" style="left:224px;top:500px;height:19px"></div><div class="vl" style="left:300px;top:500px;height:19px"></div><div class="vl" style="left:684px;top:500px;height:19px"></div><div class="vl" style="left:983px;top:500px;height:19px"></div><div class="vl" style="left:1305px;top:500px;height:19px"></div><div class="vl" style="left:25px;top:519px;height:19px"></div><div class="vl" style="left:224px;top:519px;height:19px"></div><div class="vl" style="left:300px;top:519px;height:19px"></div><div class="vl" style="left:684px;top:519px;height:19px"></div><div class="vl" style="left:983px;top:519px;height:19px"></div><div class="vl" style="left:1157px;top:519px;height:19px"></div><div class="vl" style="left:1233px;top:519px;height:19px"></div><div class="vl" style="left:1305px;top:519px;height:19px"></div><div class="vl" style="left:25px;top:538px;height:19px"></div><div class="vl" style="left:224px;top:538px;height:19px"></div><div class="vl" style="left:300px;top:538px;height:19px"></div><div class="vl" style="left:684px;top:538px;height:19px"></div><div class="vl" style="left:983px;top:538px;height:19px"></div><div class="vl" style="left:1157px;top:538px;height:19px"></div><div class="vl" style="left:1233px;top:538px;height:19px"></div><div class="vl" style="left:1305px;top:538px;height:19px"></div><div class="vl" style="left:25px;top:557px;height:19px"></div><div class="vl" style="left:224px;top:557px;height:19px"></div><div class="vl" style="left:300px;top:557px;height:19px"></div><div class="vl" style="left:684px;top:557px;height:19px"></div><div class="vl" style="left:983px;top:557px;height:19px"></div><div class="vl" style="left:1157px;top:557px;height:19px"></div><div class="vl" style="left:1233px;top:557px;height:19px"></div><div class="vl" style="left:1305px;top:557px;height:19px"></div><div class="vl" style="left:25px;top:576px;height:19px"></div><div class="vl" style="left:224px;top:576px;height:19px"></div><div class="vl" style="left:300px;top:576px;height:19px"></div><div class="vl" style="left:684px;top:576px;height:19px"></div><div class="vl" style="left:983px;top:576px;height:19px"></div><div class="vl" style="left:1157px;top:576px;height:19px"></div><div class="vl" style="left:1233px;top:576px;height:19px"></div><div class="vl" style="left:1305px;top:576px;height:19px"></div><div class="vl" style="left:25px;top:595px;height:4px"></div><div class="vl" style="left:224px;top:595px;height:4px"></div><div class="vl" style="left:300px;top:595px;height:4px"></div><div class="vl" style="left:684px;top:595px;height:4px"></div><div class="vl" style="left:983px;top:595px;height:4px"></div><div class="vl" style="left:1157px;top:595px;height:4px"></div><div class="vl" style="left:1233px;top:595px;height:4px"></div><div class="vl" style="left:1305px;top:595px;height:4px"></div><div class="hl" style="top:176px"></div><div class="hl" style="top:195px"></div><div class="hl" style="top:214px"></div><div class="hl" style="top:233px"></div><div class="hl" style="top:252px"></div><div class="hl" style="top:271px"></div><div class="hl" style="top:290px"></div><div class="hl" style="top:309px"></div><div class="hl" style="top:328px"></div><div class="hl" style="top:347px"></div><div class="hl" style="top:366px"></div><div class="hl" style="top:385px"></div><div class="hl" style="top:404px"></div><div class="hl" style="top:423px"></div><div class="hl" style="top:442px"></div><div class="hl" style="top:461px"></div><div class="hl" style="top:480px"></div><div class="hl" style="top:499px"></div><div class="hl" style="top:518px"></div><div class="hl" style="top:537px"></div><div class="hl" style="top:556px"></div><div class="hl" style="top:575px"></div><div class="hl" style="top:594px"></div><div class="ch" style="left:26px;width:198px">A</div><div class="vh" style="left:25px"></div><div class="ch" style="left:225px;width:75px">B</div><div class="vh" style="left:224px"></div><div class="ch sel" style="left:301px;width:383px">C</div><div class="vh" style="left:300px"></div><div class="ch" style="left:685px;width:298px">D</div><div class="vh" style="left:684px"></div><div class="ch" style="left:984px;width:173px">E</div><div class="vh" style="left:983px"></div><div class="ch" style="left:1158px;width:75px">F</div><div class="vh" style="left:1157px"></div><div class="ch" style="left:1234px;width:71px">G</div><div class="vh" style="left:1233px"></div><div class="a" style="left:1px;top:157px;width:1304px;height:1px;background:#ababab"></div><div class="rh" style="top:158px"><span class="s" style="left:5.50px;transform:scaleX(0.8661)">19</span></div><div class="c" style="top:158px;left:28px;width:195px"><span class="s" style="left:0.00px;transform:scaleX(1.0207)">subordinate</span><span class="s" style="left:75.33px;transform:scaleX(1.0523)">official</span></div><div class="c n" style="top:158px;left:225px;width:73px"><span class="s" style="left:40.49px;transform:scaleX(0.8661)">32701</span></div><div class="c" style="top:158px;left:303px;width:381px"><span class="s" style="left:0.00px;transform:scaleX(1.0242)">government</span><span class="s" style="left:76.33px;transform:scaleX(0.9988)">-</span><span class="s" style="left:84.13px;transform:scaleX(1.0071)">man</span><span class="s" style="left:113.90px;transform:scaleX(1.0628)">[n]:</span><span class="s" style="left:137.15px;transform:scaleX(1.0394)">fonctionnaire</span><span class="s" style="left:220.81px;transform:scaleX(1.0645)">[m];</span><span class="s" style="left:248.08px;transform:scaleX(1.0595)">officiel</span><span class="s" style="left:291.68px;transform:scaleX(1.0645)">[m];</span><span class="s" style="left:318.94px;transform:scaleX(0.9847)">responsable</span><span class="s" style="left:394.68px;transform:scaleX(1.1361)">[f]</span></div><div class="c" style="top:158px;left:687px;width:618px"><span class="s" style="left:0.00px;transform:scaleX(1.0242)">government</span><span class="s" style="left:76.33px;transform:scaleX(0.9988)">-</span><span class="s" style="left:84.13px;transform:scaleX(1.0264)">woman</span><span class="s" style="left:132.12px;transform:scaleX(1.0628)">[n]:</span><span class="s" style="left:155.37px;transform:scaleX(1.0394)">fonctionnaire</span><span class="s" style="left:239.03px;transform:scaleX(1.0645)">[m];</span><span class="s" style="left:266.30px;transform:scaleX(1.0595)">officiel</span><span class="s" style="left:309.90px;transform:scaleX(1.0645)">[m];</span><span class="s" style="left:337.16px;transform:scaleX(0.9847)">responsable</span><span class="s" style="left:412.90px;transform:scaleX(1.1137)">[f];</span><span class="s" style="left:432.93px;transform:scaleX(0.9848)">personnage</span><span class="s" style="left:506.47px;transform:scaleX(1.0681)">[m]</span><span class="s" style="left:529.81px;transform:scaleX(1.0595)">officiel</span></div><div class="rh" style="top:177px"><span class="s" style="left:5.50px;transform:scaleX(0.8661)">20</span></div><div class="c" style="top:177px;left:28px;width:195px"><span class="s" style="left:0.00px;transform:scaleX(1.0103)">suborn</span></div><div class="c n" style="top:177px;left:225px;width:73px"><span class="s" style="left:40.49px;transform:scaleX(0.8661)">32702</span></div><div class="c" style="top:177px;left:303px;width:1002px"><span class="s" style="left:0.00px;transform:scaleX(1.0306)">law</span><span class="s" style="left:24.19px;transform:scaleX(1.0475)">[v]:</span><span class="s" style="left:46.36px;transform:scaleX(1.0156)">suborner</span></div><div class="rh" style="top:196px"><span class="s" style="left:5.50px;transform:scaleX(0.8661)">21</span></div><div class="c" style="top:196px;left:28px;width:195px"><span class="s" style="left:0.00px;transform:scaleX(0.9823)">subpena</span></div><div class="c n" style="top:196px;left:225px;width:73px"><span class="s" style="left:40.49px;transform:scaleX(0.8661)">32703</span></div><div class="c" style="top:196px;left:303px;width:381px"><span class="s" style="left:0.00px;transform:scaleX(1.0306)">law</span><span class="s" style="left:24.19px;transform:scaleX(1.0628)">[n]:</span><span class="s" style="left:47.45px;transform:scaleX(1.0573)">citation</span><span class="s" style="left:95.99px;transform:scaleX(1.1361)">[f]</span></div><div class="c" style="top:196px;left:687px;width:618px"><span class="s" style="left:0.00px;transform:scaleX(1.0306)">law</span><span class="s" style="left:24.19px;transform:scaleX(1.0475)">[v]:</span><span class="s" style="left:46.36px;transform:scaleX(1.0534)">citer;</span><span class="s" style="left:80.50px;transform:scaleX(0.9641)">assigner;</span><span class="s" style="left:136.62px;transform:scaleX(1.0133)">appeler;</span><span class="s" style="left:189.37px;transform:scaleX(1.0106)">appeler</span><span class="s" style="left:238.20px;transform:scaleX(0.9992)">en</span><span class="s" style="left:256.52px;transform:scaleX(1.0121)">justice</span></div><div class="rh" style="top:215px"><span class="s" style="left:5.50px;transform:scaleX(0.8661)">22</span></div><div class="c" style="top:215px;left:28px;width:195px"><span class="s" style="left:0.00px;transform:scaleX(1.0307)">subplot</span></div><div class="c n" style="top:215px;left:225px;width:73px"><span class="s" style="left:40.49px;transform:scaleX(0.8661)">32704</span></div><div class="c" style="top:215px;left:303px;width:1002px"><span class="s" style="left:0.00px;transform:scaleX(1.0683)">literature</span><span class="s" style="left:59.43px;transform:scaleX(1.0628)">[n]:</span><span class="s" style="left:82.68px;transform:scaleX(1.0473)">intrigue</span><span class="s" style="left:132.37px;transform:scaleX(1.1361)">[f]</span><span class="s" style="left:148.47px;transform:scaleX(0.9870)">secondaire</span></div><div class="rh" style="top:234px"><span class="s" style="left:5.50px;transform:scaleX(0.8661)">23</span></div><div class="c" style="top:234px;left:28px;width:195px"><span class="s" style="left:0.00px;transform:scaleX(0.9884)">subpoena</span></div><div class="c n" style="top:234px;left:225px;width:73px"><span class="s" style="left:40.49px;transform:scaleX(0.8661)">32705</span></div><div class="c" style="top:234px;left:303px;width:381px"><span class="s" style="left:0.00px;transform:scaleX(1.0306)">law</span><span class="s" style="left:24.19px;transform:scaleX(1.0628)">[n]:</span><span class="s" style="left:47.45px;transform:scaleX(1.0573)">citation</span><span class="s" style="left:95.99px;transform:scaleX(1.1137)">[f];</span><span class="s" style="left:116.01px;transform:scaleX(0.9842)">assignation</span><span class="s" style="left:186.55px;transform:scaleX(1.1361)">[f]</span></div><div class="c" style="top:234px;left:687px;width:618px"><span class="s" style="left:0.00px;transform:scaleX(1.0306)">law</span><span class="s" style="left:24.19px;transform:scaleX(1.0475)">[v]:</span><span class="s" style="left:46.36px;transform:scaleX(1.0534)">citer;</span><span class="s" style="left:80.50px;transform:scaleX(0.9641)">assigner;</span><span class="s" style="left:136.62px;transform:scaleX(1.0133)">appeler;</span><span class="s" style="left:189.37px;transform:scaleX(1.0106)">appeler</span><span class="s" style="left:238.20px;transform:scaleX(0.9992)">en</span><span class="s" style="left:256.52px;transform:scaleX(1.0121)">justice</span></div><div class="rh" style="top:253px"><span class="s" style="left:5.50px;transform:scaleX(0.8661)">24</span></div><div class="c" style="top:253px;left:28px;width:195px"><span class="s" style="left:0.00px;transform:scaleX(1.0059)">subprogram</span></div><div class="c n" style="top:253px;left:225px;width:73px"><span class="s" style="left:40.49px;transform:scaleX(0.8661)">32706</span></div><div class="c" style="top:253px;left:303px;width:1002px"><span class="s" style="left:0.00px;transform:scaleX(1.0150)">data</span><span class="s" style="left:29.99px;transform:scaleX(0.9727)">processing</span><span class="s" style="left:96.80px;transform:scaleX(1.0628)">[n]:</span><span class="s" style="left:120.06px;transform:scaleX(1.0128)">sous-routine</span><span class="s" style="left:198.61px;transform:scaleX(1.1137)">[f];</span><span class="s" style="left:218.64px;transform:scaleX(0.9970)">sous-programme</span><span class="s" style="left:323.68px;transform:scaleX(1.0681)">[m]</span></div><div class="rh" style="top:272px"><span class="s" style="left:5.50px;transform:scaleX(0.8661)">25</span></div><div class="c" style="top:272px;left:28px;width:195px"><span class="s" style="left:0.00px;transform:scaleX(1.0308)">subroutine</span></div><div class="c n" style="top:272px;left:225px;width:73px"><span class="s" style="left:40.49px;transform:scaleX(0.8661)">32707</span></div><div class="c" style="top:272px;left:303px;width:1002px"><span class="s" style="left:0.00px;transform:scaleX(1.0150)">data</span><span class="s" style="left:29.99px;transform:scaleX(0.9727)">processing</span><span class="s" style="left:96.80px;transform:scaleX(1.0628)">[n]:</span><span class="s" style="left:120.06px;transform:scaleX(1.0128)">sous-routine</span><span class="s" style="left:198.61px;transform:scaleX(1.1137)">[f];</span><span class="s" style="left:218.64px;transform:scaleX(0.9970)">sous-programme</span><span class="s" style="left:323.68px;transform:scaleX(1.0681)">[m]</span></div><div class="rh" style="top:291px"><span class="s" style="left:5.50px;transform:scaleX(0.8661)">26</span></div><div class="c" style="top:291px;left:28px;width:195px"><span class="s" style="left:0.00px;transform:scaleX(0.9791)">subscribe</span></div><div class="c n" style="top:291px;left:225px;width:73px"><span class="s" style="left:40.49px;transform:scaleX(0.8661)">32708</span></div><div class="c" style="top:291px;left:303px;width:1002px"><span class="s" style="left:0.00px;transform:scaleX(1.0004)">newspaper</span><span class="s" style="left:69.39px;transform:scaleX(1.0475)">[v]:</span><span class="s" style="left:91.56px;transform:scaleX(0.9861)">souscrire</span></div><div class="rh" style="top:310px"><span class="s" style="left:5.50px;transform:scaleX(0.8661)">27</span></div><div class="c" style="top:310px;left:28px;width:195px"><span class="s" style="left:0.00px;transform:scaleX(0.9905)">subscriber</span></div><div class="c n" style="top:310px;left:225px;width:73px"><span class="s" style="left:40.49px;transform:scaleX(0.8898)">32711</span></div><div class="c" style="top:310px;left:303px;width:381px"><span class="s" style="left:0.00px;transform:scaleX(0.9709)">magazine</span><span class="s" style="left:60.15px;transform:scaleX(0.9988)">-</span><span class="s" style="left:67.96px;transform:scaleX(1.0071)">man</span><span class="s" style="left:97.72px;transform:scaleX(1.0628)">[n]:</span><span class="s" style="left:120.97px;transform:scaleX(1.0028)">abonné</span><span class="s" style="left:169.47px;transform:scaleX(1.0681)">[m]</span></div><div class="c" style="top:310px;left:687px;width:618px"><span class="s" style="left:0.00px;transform:scaleX(0.9709)">magazine</span><span class="s" style="left:60.15px;transform:scaleX(0.9988)">-</span><span class="s" style="left:67.96px;transform:scaleX(1.0264)">woman</span><span class="s" style="left:115.94px;transform:scaleX(1.0628)">[n]:</span><span class="s" style="left:139.19px;transform:scaleX(0.9984)">abonnée</span><span class="s" style="left:194.98px;transform:scaleX(1.1361)">[f]</span></div><div class="rh" style="top:329px"><span class="s" style="left:5.50px;transform:scaleX(0.8661)">28</span></div><div class="c" style="top:329px;left:28px;width:195px"><span class="s" style="left:0.00px;transform:scaleX(0.9791)">subscribe</span><span class="s" style="left:59.89px;transform:scaleX(1.1233)">to</span></div><div class="c n" style="top:329px;left:225px;width:73px"><span class="s" style="left:40.49px;transform:scaleX(0.8661)">32709</span></div><div class="c" style="top:329px;left:303px;width:1002px"><span class="s" style="left:0.00px;transform:scaleX(1.0004)">newspaper</span><span class="s" style="left:69.39px;transform:scaleX(1.0475)">[v]:</span><span class="s" style="left:91.56px;transform:scaleX(1.0066)">s&#x27;abonner</span><span class="s" style="left:154.14px;transform:scaleX(0.9726)">à;</span><span class="s" style="left:168.41px;transform:scaleX(1.0303)">prendre</span><span class="s" style="left:219.66px;transform:scaleX(1.0263)">un</span><span class="s" style="left:238.39px;transform:scaleX(1.0233)">abonnement</span><span class="s" style="left:318.51px;transform:scaleX(0.9357)">à</span></div><div class="rh" style="top:348px"><span class="s" style="left:5.50px;transform:scaleX(0.8661)">29</span></div><div class="c" style="top:348px;left:28px;width:195px"><span class="s" style="left:0.00px;transform:scaleX(0.9791)">subscribe</span><span class="s" style="left:59.89px;transform:scaleX(1.0305)">towards</span></div><div class="c n" style="top:348px;left:225px;width:73px"><span class="s" style="left:40.49px;transform:scaleX(0.8661)">32710</span></div><div class="c" style="top:348px;left:303px;width:1002px"><span class="s" style="left:0.00px;transform:scaleX(1.0165)">present</span><span class="s" style="left:49.09px;transform:scaleX(1.0475)">[v]:</span><span class="s" style="left:71.26px;transform:scaleX(0.9861)">souscrire</span><span class="s" style="left:128.58px;transform:scaleX(1.0459)">pour</span></div><div class="rh" style="top:367px"><span class="s" style="left:5.50px;transform:scaleX(0.8661)">30</span></div><div class="c" style="top:367px;left:28px;width:195px"><span class="s" style="left:0.00px;transform:scaleX(1.0133)">subscription</span></div><div class="c n" style="top:367px;left:225px;width:73px"><span class="s" style="left:40.49px;transform:scaleX(0.8661)">32712</span></div><div class="c" style="top:367px;left:303px;width:1002px"><span class="s" style="left:0.00px;transform:scaleX(1.0004)">newspaper</span><span class="s" style="left:69.39px;transform:scaleX(1.0628)">[n]:</span><span class="s" style="left:92.64px;transform:scaleX(1.0233)">abonnement</span><span class="s" style="left:172.77px;transform:scaleX(1.0681)">[m]</span></div><div class="rh" style="top:386px"><span class="s" style="left:5.50px;transform:scaleX(0.8661)">31</span></div><div class="c" style="top:386px;left:28px;width:195px"><span class="s" style="left:0.00px;transform:scaleX(0.9932)">subsection</span></div><div class="c n" style="top:386px;left:225px;width:73px"><span class="s" style="left:40.49px;transform:scaleX(0.8661)">32713</span></div><div class="c" style="top:386px;left:303px;width:1002px"><span class="s" style="left:0.00px;transform:scaleX(1.0306)">law</span><span class="s" style="left:24.19px;transform:scaleX(1.0628)">[n]:</span><span class="s" style="left:47.45px;transform:scaleX(1.0353)">article</span><span class="s" style="left:88.04px;transform:scaleX(1.0681)">[m]</span></div><div class="rh" style="top:405px"><span class="s" style="left:5.50px;transform:scaleX(0.8661)">32</span></div><div class="c" style="top:405px;left:28px;width:195px"><span class="s" style="left:0.00px;transform:scaleX(0.9957)">subsequent</span></div><div class="c n" style="top:405px;left:225px;width:73px"><span class="s" style="left:40.49px;transform:scaleX(0.8661)">32714</span></div><div class="c" style="top:405px;left:303px;width:1002px"><span class="s" style="left:0.00px;transform:scaleX(0.9928)">general</span><span class="s" style="left:48.03px;transform:scaleX(1.0265)">[a]:</span><span class="s" style="left:70.60px;transform:scaleX(0.9983)">subséquent;</span><span class="s" style="left:147.35px;transform:scaleX(1.0325)">postérieur</span></div><div class="rh" style="top:424px"><span class="s" style="left:5.50px;transform:scaleX(0.8661)">33</span></div><div class="c" style="top:424px;left:28px;width:195px"><span class="s" style="left:0.00px;transform:scaleX(0.9995)">subsequently</span></div><div class="c n" style="top:424px;left:225px;width:73px"><span class="s" style="left:40.49px;transform:scaleX(0.8661)">32715</span></div><div class="c" style="top:424px;left:303px;width:1002px"><span class="s" style="left:0.00px;transform:scaleX(1.0047)">adverb</span><span class="s" style="left:44.79px;transform:scaleX(1.0643)">[o]:</span><span class="s" style="left:68.07px;transform:scaleX(0.9809)">après;</span><span class="s" style="left:108.19px;transform:scaleX(0.9899)">plus</span><span class="s" style="left:136.02px;transform:scaleX(1.0618)">tard;</span><span class="s" style="left:168.02px;transform:scaleX(1.0113)">ensuite</span></div><div class="rh" style="top:443px"><span class="s" style="left:5.50px;transform:scaleX(0.8661)">34</span></div><div class="c" style="top:443px;left:28px;width:195px"><span class="s" style="left:0.00px;transform:scaleX(1.0024)">subservient</span></div><div class="c n" style="top:443px;left:225px;width:73px"><span class="s" style="left:40.49px;transform:scaleX(0.8661)">32716</span></div><div class="c" style="top:443px;left:303px;width:381px"><span class="s" style="left:0.00px;transform:scaleX(1.0299)">importance</span><span class="s" style="left:72.10px;transform:scaleX(1.0265)">[a]:</span><span class="s" style="left:94.67px;transform:scaleX(1.0117)">subordonné</span></div><div class="c" style="top:443px;left:687px;width:618px"><span class="s" style="left:0.00px;transform:scaleX(1.0152)">behavior</span><span class="s" style="left:55.89px;transform:scaleX(1.0265)">[a]:</span><span class="s" style="left:78.46px;transform:scaleX(1.0348)">rampant;</span><span class="s" style="left:136.91px;transform:scaleX(0.9992)">servile;</span><span class="s" style="left:182.95px;transform:scaleX(0.9852)">visqueux</span></div><div class="rh" style="top:462px"><span class="s" style="left:5.50px;transform:scaleX(0.8661)">35</span></div><div class="c" style="top:462px;left:28px;width:195px"><span class="s" style="left:0.00px;transform:scaleX(0.9725)">subside</span></div><div class="c n" style="top:462px;left:225px;width:73px"><span class="s" style="left:40.49px;transform:scaleX(0.8661)">32717</span></div><div class="c" style="top:462px;left:303px;width:381px"><span class="s" style="left:0.00px;transform:scaleX(1.0539)">wind</span><span class="s" style="left:32.58px;transform:scaleX(1.0475)">[v]:</span><span class="s" style="left:54.75px;transform:scaleX(1.0576)">tomber;</span><span class="s" style="left:106.47px;transform:scaleX(0.9142)">se</span><span class="s" style="left:122.82px;transform:scaleX(1.0053)">calmer</span></div><div class="c" style="top:462px;left:687px;width:296px"><span class="s" style="left:0.00px;transform:scaleX(1.0387)">nature</span><span class="s" style="left:43.08px;transform:scaleX(1.0475)">[v]:</span><span class="s" style="left:65.25px;transform:scaleX(0.9854)">s&#x27;affaisser</span></div><div class="c" style="top:462px;left:986px;width:319px"><span class="s" style="left:0.00px;transform:scaleX(1.0277)">building</span><span class="s" style="left:51.14px;transform:scaleX(1.0475)">[v]:</span><span class="s" style="left:73.31px;transform:scaleX(0.9890)">s&#x27;affaisser;</span><span class="s" style="left:139.78px;transform:scaleX(0.9142)">se</span><span class="s" style="left:156.13px;transform:scaleX(0.9811)">tasser;</span><span class="s" style="left:199.19px;transform:scaleX(0.9142)">se</span><span class="s" style="left:215.54px;transform:scaleX(1.0181)">déniveler</span></div><div class="rh" style="top:481px"><span class="s" style="left:5.50px;transform:scaleX(0.8661)">36</span></div><div class="c" style="top:481px;left:28px;width:195px"><span class="s" style="left:0.00px;transform:scaleX(0.9731)">subsidence</span></div><div class="c n" style="top:481px;left:225px;width:73px"><span class="s" style="left:40.49px;transform:scaleX(0.8661)">32718</span></div><div class="c" style="top:481px;left:303px;width:1002px"><span class="s" style="left:0.00px;transform:scaleX(1.0277)">building</span><span class="s" style="left:51.14px;transform:scaleX(1.0628)">[n]:</span><span class="s" style="left:74.39px;transform:scaleX(1.0063)">affaissement</span><span class="s" style="left:154.48px;transform:scaleX(1.0681)">[m]</span></div><div class="rh" style="top:500px"><span class="s" style="left:5.50px;transform:scaleX(0.8661)">37</span></div><div class="c" style="top:500px;left:28px;width:195px"><span class="s" style="left:0.00px;transform:scaleX(0.9889)">subsidiary</span></div><div class="c n" style="top:500px;left:225px;width:73px"><span class="s" style="left:40.49px;transform:scaleX(0.8661)">32719</span></div><div class="c" style="top:500px;left:303px;width:381px"><span class="s" style="left:0.00px;transform:scaleX(1.0076)">objects</span><span class="s" style="left:46.41px;transform:scaleX(1.0265)">[a]:</span><span class="s" style="left:68.99px;transform:scaleX(1.0155)">auxiliaire;</span><span class="s" style="left:130.21px;transform:scaleX(1.0190)">supplémentaire;</span><span class="s" style="left:231.41px;transform:scaleX(1.0259)">complémentaire;</span><span class="s" style="left:337.10px;transform:scaleX(0.9564)">accessoire</span></div><div class="c" style="top:500px;left:687px;width:296px"><span class="s" style="left:0.00px;transform:scaleX(1.0004)">person</span><span class="s" style="left:44.61px;transform:scaleX(1.0265)">[a]:</span><span class="s" style="left:67.18px;transform:scaleX(1.0155)">auxiliaire;</span><span class="s" style="left:128.41px;transform:scaleX(0.9790)">assistant</span></div><div class="c" style="top:500px;left:986px;width:319px"><span class="s" style="left:0.00px;transform:scaleX(0.9570)">business</span><span class="s" style="left:54.31px;transform:scaleX(0.9991)">company</span><span class="s" style="left:112.35px;transform:scaleX(1.0628)">[n]:</span><span class="s" style="left:135.61px;transform:scaleX(1.0487)">filiale</span><span class="s" style="left:171.18px;transform:scaleX(1.1137)">[f];</span><span class="s" style="left:191.21px;transform:scaleX(0.9622)">succursale</span><span class="s" style="left:256.62px;transform:scaleX(1.1361)">[f]</span></div><div class="rh" style="top:519px"><span class="s" style="left:5.50px;transform:scaleX(0.8661)">38</span></div><div class="c" style="top:519px;left:28px;width:195px"><span class="s" style="left:0.00px;transform:scaleX(0.9889)">subsidiary</span><span class="s" style="left:63.42px;transform:scaleX(0.9991)">company</span></div><div class="c n" style="top:519px;left:225px;width:73px"><span class="s" style="left:40.49px;transform:scaleX(0.8661)">32720</span></div><div class="c" style="top:519px;left:303px;width:1002px"><span class="s" style="left:0.00px;transform:scaleX(0.9570)">business</span><span class="s" style="left:54.31px;transform:scaleX(0.9991)">company</span><span class="s" style="left:112.35px;transform:scaleX(1.0628)">[n]:</span><span class="s" style="left:135.61px;transform:scaleX(1.0487)">filiale</span><span class="s" style="left:171.18px;transform:scaleX(1.1137)">[f];</span><span class="s" style="left:191.21px;transform:scaleX(0.9622)">succursale</span><span class="s" style="left:256.62px;transform:scaleX(1.1361)">[f]</span></div><div class="rh" style="top:538px"><span class="s" style="left:5.50px;transform:scaleX(0.8661)">39</span></div><div class="c" style="top:538px;left:28px;width:195px"><span class="s" style="left:0.00px;transform:scaleX(0.9668)">subsidize</span></div><div class="c n" style="top:538px;left:225px;width:73px"><span class="s" style="left:40.49px;transform:scaleX(0.8661)">32721</span></div><div class="c" style="top:538px;left:303px;width:1002px"><span class="s" style="left:0.00px;transform:scaleX(0.9928)">general</span><span class="s" style="left:48.03px;transform:scaleX(1.0475)">[v]:</span><span class="s" style="left:70.20px;transform:scaleX(1.0212)">subventionner</span></div><div class="rh" style="top:557px"><span class="s" style="left:5.50px;transform:scaleX(0.8661)">40</span></div><div class="c" style="top:557px;left:28px;width:195px"><span class="s" style="left:0.00px;transform:scaleX(0.9743)">subsidy</span></div><div class="c n" style="top:557px;left:225px;width:73px"><span class="s" style="left:40.49px;transform:scaleX(0.8661)">32722</span></div><div class="c" style="top:557px;left:303px;width:1002px"><span class="s" style="left:0.00px;transform:scaleX(0.9928)">general</span><span class="s" style="left:48.03px;transform:scaleX(1.0628)">[n]:</span><span class="s" style="left:71.28px;transform:scaleX(1.0183)">subvention</span><span class="s" style="left:141.09px;transform:scaleX(1.1361)">[f]</span></div><div class="rh" style="top:576px"><span class="s" style="left:5.50px;transform:scaleX(0.8661)">41</span></div><div class="c" style="top:576px;left:28px;width:195px"><span class="s" style="left:0.00px;transform:scaleX(1.0143)">sulfonamide</span></div><div class="c n" style="top:576px;left:225px;width:73px"><span class="s" style="left:40.49px;transform:scaleX(0.8661)">32849</span></div><div class="c" style="top:576px;left:303px;width:1002px"><span class="s" style="left:0.00px;transform:scaleX(0.9976)">pharmacy</span><span class="s" style="left:62.45px;transform:scaleX(1.0628)">[n]:</span><span class="s" style="left:85.70px;transform:scaleX(1.0107)">sulfamide</span><span class="s" style="left:147.41px;transform:scaleX(1.0681)">[m]</span></div></div>
<svg class="a" style="left:0;top:0" width="1327" height="646">
<g font-family="Liberation Serif" font-weight="bold" fill="#000" stroke="#000" stroke-width="13" stroke-linejoin="round">
<text transform="translate(43,75) rotate(-21) scale(0.72,1)" font-size="27.5">CRACK</text><text transform="translate(18.5,110) rotate(-19) scale(0.73,1)" font-size="27.5">VSE-PUTEM.com</text>
</g>
<g font-family="Liberation Serif" font-weight="bold" fill="#fff" stroke="#fff" stroke-width="2" stroke-linejoin="round">
<text transform="translate(43,75) rotate(-21) scale(0.72,1)" font-size="27.5">CRACK</text><text transform="translate(18.5,110) rotate(-19) scale(0.73,1)" font-size="27.5">VSE-PUTEM.com</text>
</g></svg>
</body></html>
